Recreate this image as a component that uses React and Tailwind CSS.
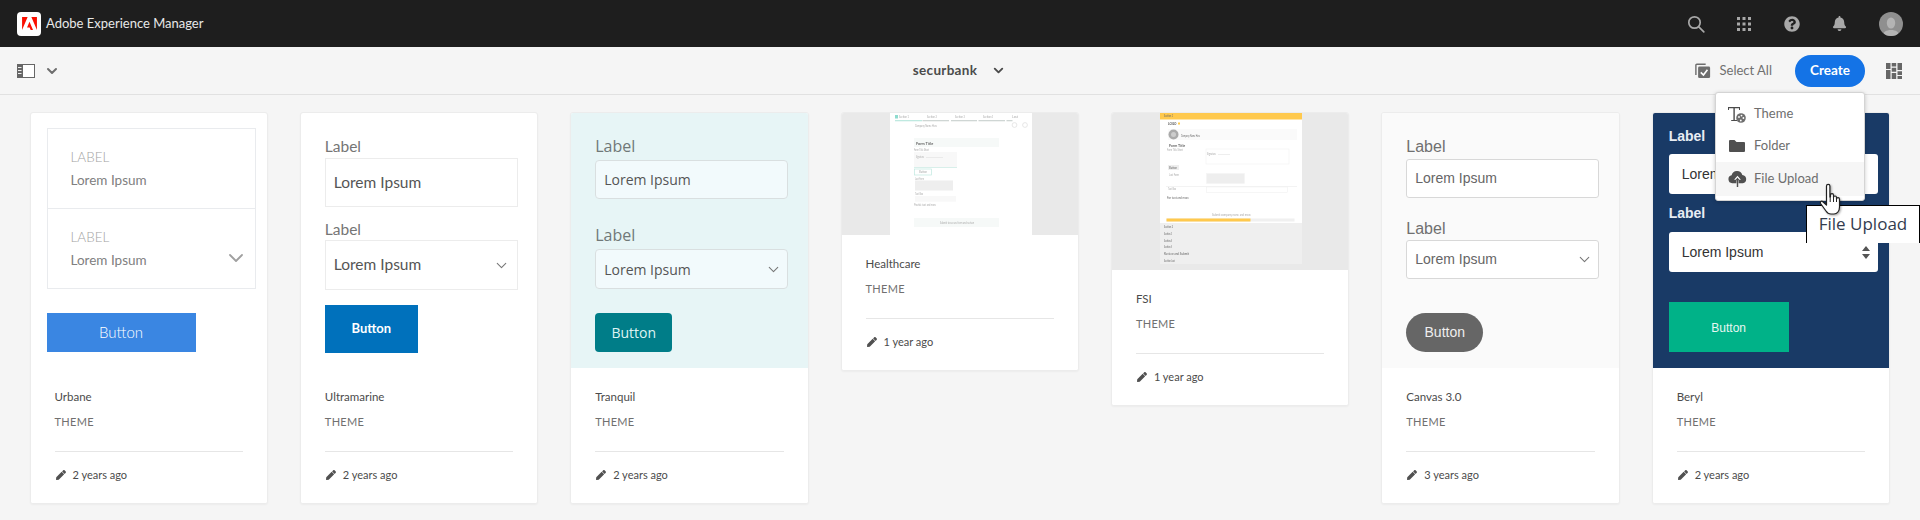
import React from "react";
import { ChevronDown } from "lucide-react";
import { FaBell, FaQuestionCircle, FaPen } from "react-icons/fa";

const SANS = "font-['Lato','Noto_Sans',sans-serif]";

// Small captions inside the thumbnails
const Tiny = ({ x, y, w, children, dark }) => (
  <text
    x={x}
    y={y}
    fontSize="3"
    textLength={w}
    lengthAdjust="spacingAndGlyphs"
    fill={dark ? "#666" : "#aaa"}
    fontFamily="Lato, sans-serif"
  >
    {children}
  </text>
);

const HealthcareThumb = () => (
  <svg width="238" height="122" viewBox="0 0 238 122" className="block blur-[0.3px]">
    <rect width="238" height="122" fill="#e9e9e9" />
    <rect x="48" width="142" height="122" fill="#fff" />
    <rect x="53" y="2" width="3" height="3.5" fill="#8fdccf" />
    <rect x="53" y="7" width="27" height="1.3" fill="#bfe9e0" />
    <rect x="80.5" y="7" width="26.5" height="1.3" fill="#cfd6d4" />
    <rect x="109" y="7" width="26" height="1.3" fill="#cfd6d4" />
    <rect x="136.5" y="7" width="26.5" height="1.3" fill="#cfd6d4" />
    <rect x="164.5" y="7" width="6" height="1.3" fill="#cfd6d4" />
    <Tiny x={57} y={4.5} w={10}>Section 1</Tiny>
    <Tiny x={85} y={4.5} w={10}>Section 2</Tiny>
    <Tiny x={113} y={4.5} w={10}>Section 3</Tiny>
    <Tiny x={141} y={4.5} w={10}>Section 4</Tiny>
    <Tiny x={170} y={4.5} w={6}>Last</Tiny>
    <Tiny x={73} y={14} w={22}>Company Name Here</Tiny>
    <circle cx="172.5" cy="12" r="2.4" fill="none" stroke="#ddd" strokeWidth="0.7" />
    <circle cx="183" cy="12" r="2.4" fill="none" stroke="#ddd" strokeWidth="0.7" />
    <rect x="72" y="25" width="85" height="9" fill="#f6f9f8" />
    <text x="74" y="31.5" fontSize="3.8" fontWeight="700" fill="#666" fontFamily="Lato, sans-serif">Form Title</text>
    <Tiny x={72} y={38} w={15}>Form Title Short</Tiny>
    <rect x="72" y="39" width="43" height="15" fill="#f8f8f8" />
    <rect x="72" y="54" width="43" height="0.7" fill="#c7e9e1" />
    <Tiny x={74} y={45} w={8}>Signature</Tiny>
    <rect x="84" y="44" width="17" height="0.5" fill="#ddd" />
    <rect x="72.5" y="56" width="17" height="6" fill="#fff" stroke="#bfe9e0" strokeWidth="0.7" />
    <Tiny x={77} y={60} w={8}>Button</Tiny>
    <Tiny x={73} y={67} w={9}>Last Form</Tiny>
    <rect x="73" y="67.5" width="38" height="10" fill="#eee" />
    <Tiny x={73} y={82} w={8}>Text Box</Tiny>
    <rect x="73" y="83" width="41" height="5.7" fill="#f8f8f8" />
    <Tiny x={72} y={93} w={22}>Provide text and more</Tiny>
    <rect x="72" y="105" width="85" height="9" fill="#f6f9f8" />
    <Tiny x={98} y={110.5} w={34}>Submit to secure form and review</Tiny>
  </svg>
);

const FsiThumb = () => (
  <svg width="238" height="157" viewBox="0 0 238 157" className="block blur-[0.3px]">
    <rect width="238" height="157" fill="#e9e9e9" />
    <rect x="48" width="142" height="151" fill="#fff" />
    <rect x="48" width="142" height="6.5" fill="#ffc94d" />
    <Tiny x={52} y={4} w={9} dark>Section 1</Tiny>
    <text x="56" y="11.5" fontSize="3" fontWeight="700" fill="#555" fontFamily="Lato, sans-serif">LOGO</text>
    <rect x="66" y="9.5" width="2" height="2" fill="#ffc94d" />
    <rect x="56" y="16" width="129" height="11" fill="#fafafa" />
    <circle cx="61.5" cy="21.5" r="5" fill="#aaa" />
    <circle cx="61.5" cy="21.5" r="2.5" fill="#ccc" />
    <Tiny x={69} y={24} w={19} dark>Company Name Here</Tiny>
    <text x="57" y="33.5" fontSize="3.6" fontWeight="700" fill="#666" fontFamily="Lato, sans-serif">Form Title</text>
    <Tiny x={55} y={38} w={16}>Form Title Short</Tiny>
    <rect x="94" y="36" width="83" height="15" fill="#fff" stroke="#eee" strokeWidth="0.5" />
    <Tiny x={95} y={42} w={9}>Signature</Tiny>
    <rect x="106" y="41" width="12" height="0.5" fill="#ddd" />
    <rect x="56" y="52" width="11" height="5" fill="#eee" />
    <Tiny x={57} y={55.8} w={8} dark>Button</Tiny>
    <Tiny x={57} y={63} w={10}>Last Form</Tiny>
    <rect x="94.5" y="60.5" width="38" height="10" fill="#eee" stroke="#f4f4f4" strokeWidth="0.5" />
    <rect x="54" y="73" width="131" height="0.7" fill="#eee" />
    <Tiny x={56} y={77} w={8}>Text Box</Tiny>
    <rect x="94.5" y="74" width="81" height="5.4" fill="#fff" stroke="#eee" strokeWidth="0.5" />
    <Tiny x={55} y={85.5} w={22} dark>For text and more</Tiny>
    <Tiny x={100} y={102.5} w={39}>Submit company name and more</Tiny>
    <rect x="54.5" y="105.5" width="128" height="3" fill="#f0f0f0" />
    <rect x="54.5" y="105.5" width="84" height="3" fill="#ffc94d" />
    <rect x="48" y="110" width="142" height="41" fill="#efefef" />
    <Tiny x={52} y={114.5} w={9} dark>Section 2</Tiny>
    <Tiny x={52} y={121.5} w={8} dark>Section 3</Tiny>
    <Tiny x={52} y={128.5} w={8} dark>Section 4</Tiny>
    <Tiny x={52} y={135} w={8} dark>Section 5</Tiny>
    <Tiny x={52} y={142} w={25} dark>Review and Submit</Tiny>
    <Tiny x={52} y={149} w={11} dark>Section Last</Tiny>
  </svg>
);

const CardFooter = ({ name, when }) => (
  <div className={`h-[135px] shrink-0 bg-white px-6 pt-[19px] text-[#4b4b4b] ${SANS}`}>
    <p className="h-5 text-[11.5px] leading-5">{name}</p>
    <p className="mt-[5px] h-5 text-[11px] leading-5 tracking-[0.3px] text-[#707070]">THEME</p>
    <div className="mt-[19px] h-px bg-[#e6e6e6]" />
    <p className="mt-[13px] flex h-5 items-center gap-[7px] text-[11px] leading-5">
      <FaPen size={10} className="ml-[1px] text-[#505050]" />
      {when}
    </p>
  </div>
);

const Card = ({ children, name, when }) => (
  <div className="flex flex-col self-start overflow-hidden rounded-[3px] border border-[#ececec] bg-white shadow-[0_1px_2px_rgba(0,0,0,0.04)]">
    {children}
    <CardFooter name={name} when={when} />
  </div>
);

const SmallChevron = ({ color = "#777" }) => <ChevronDown size={17} color={color} strokeWidth={1.5} />;

const Urbane = () => (
  <Card name="Urbane" when="2 years ago">
    <div className={`h-[255px] pl-4 pt-[15px] ${SANS}`}>
      <div className="h-[161px] w-[209px] border border-[#e9ebee]">
        <div className="h-[80px] border-b border-[#e9ebee] pl-[23px] pt-[18px]">
          <p className="h-5 text-[13.5px] font-light leading-5 text-[#a3a3a3]">LABEL</p>
          <p className="mt-[3px] text-[13.5px] leading-5 text-[#808080]">Lorem Ipsum</p>
        </div>
        <div className="flex items-end justify-between pb-3 pl-[23px] pr-[7px] pt-[18px]">
          <div>
            <p className="h-5 text-[13.5px] font-light leading-5 text-[#a3a3a3]">LABEL</p>
            <p className="mt-[3px] text-[13.5px] leading-5 text-[#808080]">Lorem Ipsum</p>
          </div>
          <ChevronDown size={24} color="#a0a0a0" strokeWidth={1.8} />
        </div>
      </div>
      <div className="mt-6 flex h-[39px] w-[149px] items-center justify-center bg-[#3a86e2] text-[15px] font-light text-white">
        Button
      </div>
    </div>
  </Card>
);

const Ultramarine = () => (
  <Card name="Ultramarine" when="2 years ago">
    <div className={`h-[255px] pl-6 pt-[23px] ${SANS}`}>
      <p className="mb-[2px] h-5 text-[15.5px] leading-5 text-[#757575]">Label</p>
      <div className="flex h-[49px] w-[193px] items-center border border-[#ececec] pl-2 text-[15.5px] text-[#555]">
        Lorem Ipsum
      </div>
      <p className="mb-px mt-[12px] h-5 text-[15.5px] leading-5 text-[#757575]">Label</p>
      <div className="flex h-[50px] w-[193px] items-center justify-between border border-[#ececec] pl-2 pr-[7px] text-[15.5px] text-[#555]">
        Lorem Ipsum
        <SmallChevron />
      </div>
      <div className="mt-[15px] flex h-[48px] w-[93px] items-center justify-center bg-[#0071bc] text-[13px] font-bold text-white">
        Button
      </div>
    </div>
  </Card>
);

const Tranquil = () => (
  <Card name="Tranquil" when="2 years ago">
    <div className="h-[255px] bg-[#e7f5f6] pl-6 pt-[23px] font-['Open_Sans',sans-serif]">
      <p className="mb-1 h-5 text-[16px] leading-5 text-[#707878]">Label</p>
      <div className="flex h-[39px] w-[193px] items-center rounded-[4px] border border-[#d9dfe0] bg-[#f2fafc] pl-2 text-[14px] text-[#555]">
        Lorem Ipsum
      </div>
      <p className="mb-1 mt-[26px] h-5 text-[16px] leading-5 text-[#707878]">Label</p>
      <div className="flex h-[40px] w-[193px] items-center justify-between rounded-[4px] border border-[#d9dfe0] bg-[#f2fafc] pl-2 pr-[5px] text-[14px] text-[#555]">
        Lorem Ipsum
        <SmallChevron />
      </div>
      <div className="mt-6 flex h-[39px] w-[77px] items-center justify-center rounded-[4px] bg-[#007d88] text-[14px] text-[#dff3f3]">
        Button
      </div>
    </div>
  </Card>
);

const Canvas = () => (
  <Card name="Canvas 3.0" when="3 years ago">
    <div className="h-[255px] bg-[#fafafa] pl-6 pt-6 font-['Liberation_Sans',sans-serif]">
      <p className="mb-[2px] h-5 text-[16px] leading-5 text-[#707070]">Label</p>
      <div className="flex h-[39px] w-[193px] items-center rounded-[3px] border border-[#d8d8d8] bg-white pl-2 text-[14px] text-[#666]">
        Lorem Ipsum
      </div>
      <p className="mb-px mt-[21px] h-5 text-[16px] leading-5 text-[#707070]">Label</p>
      <div className="flex h-[39px] w-[193px] items-center justify-between rounded-[3px] border border-[#d8d8d8] bg-white pl-2 pr-[5px] text-[14px] text-[#666]">
        Lorem Ipsum
        <SmallChevron />
      </div>
      <div className="mt-[34px] flex h-[39px] w-[77px] items-center justify-center rounded-full bg-[#666] text-[14px] text-[#eee]">
        Button
      </div>
    </div>
  </Card>
);

const Beryl = () => (
  <Card name="Beryl" when="2 years ago">
    <div className="h-[255px] bg-[#193a66] pl-4 pt-[13px] font-['Liberation_Sans',sans-serif]">
      <p className="mb-2 h-5 text-[14px] font-bold leading-5 text-[#e8edf3]">Label</p>
      <div className="flex h-[40px] w-[209px] items-center rounded-[3px] bg-white pl-[13px] text-[14px] text-[#333]">
        Lorem Ipsum
      </div>
      <p className="mb-[9px] mt-[9px] h-5 text-[14px] font-bold leading-5 text-[#e8edf3]">Label</p>
      <div className="flex h-[40px] w-[209px] items-center justify-between rounded-[3px] bg-white pl-[13px] pr-[8px] text-[14px] text-[#333]">
        Lorem Ipsum
        <svg width="8" height="13" viewBox="0 0 8 13">
          <path d="M4 0 8 5H0zM4 13 0 8h8z" fill="#555" />
        </svg>
      </div>
      <div className="mt-[30px] flex h-[50px] w-[120px] items-center justify-center bg-[#00b288] pt-[2px] text-[12px] text-[#e6f7f2]">
        Button
      </div>
    </div>
  </Card>
);

const AdobeMark = () => (
  <svg width="15" height="13" viewBox="0 0 24 21" fill="#fa0f00">
    <path d="M15 0h9v21zM9 0H0v21zM12 7.8 17.7 21h-3.8l-1.7-4.2H8z" />
  </svg>
);

const TopBar = () => (
  <header className={`flex h-[47px] items-center justify-between bg-[#1e1e1e] pl-[17px] pr-[17px] ${SANS}`}>
    <div className="flex items-center gap-[5px]">
      <span className="flex h-6 w-6 items-center justify-center rounded-[4px] bg-white">
        <AdobeMark />
      </span>
      <span className="text-[13px] text-[#e8e8e8]">Adobe Experience Manager</span>
    </div>
    <div className="flex items-center text-[#a8a8a8]">
      <svg width="18" height="18" viewBox="0 0 18 18" fill="none" stroke="#a8a8a8" strokeWidth="1.7">
        <circle cx="7.5" cy="7.5" r="5.7" />
        <path d="m11.8 11.8 5 5" strokeLinecap="round" />
      </svg>
      <svg width="16" height="16" viewBox="0 0 16 16" fill="#a8a8a8" className="ml-[31px]">
        {[1, 6.5, 12].flatMap((y) =>
          [1, 6.5, 12].map((x) => <rect key={`${x}-${y}`} x={x} y={y} width="3" height="3" />)
        )}
      </svg>
      <FaQuestionCircle size={16} className="ml-[32px]" />
      <FaBell size={15} className="ml-[32px]" />
      <span className="ml-[32px] flex h-6 w-6 items-end justify-center overflow-hidden rounded-full bg-[#8f8f8f]">
        <svg width="16" height="20" viewBox="0 0 16 20" fill="#b4b4b4">
          <ellipse cx="8" cy="7" rx="4.2" ry="5.5" />
          <path d="M0 20c0-4 3-6 8-6s8 2 8 6z" />
        </svg>
      </span>
    </div>
  </header>
);

const ToolBar = () => (
  <div className={`grid h-[48px] grid-cols-[1fr_auto_1fr] items-center border-b border-[#e1e1e1] bg-[#f5f5f5] pl-[17px] pr-[18px] ${SANS}`}>
    <div className="flex items-center gap-[9px]">
      <svg width="18" height="14" viewBox="0 0 18 14">
        <path d="M0 0h18v14H0z" fill="#666" />
        <path d="M6 1h11v12H6z" fill="#fff" />
        <path d="M1 3h3.5v1H1zM1 6h3.5v1H1zM1 9h3.5v1H1z" fill="#eee" />
      </svg>
      <ChevronDown size={16} color="#6e6e6e" strokeWidth={3} />
    </div>
    <div className="flex items-center gap-[14px] text-[13.5px] font-bold tracking-[0.3px] text-[#4b4b4b]">
      securbank
      <ChevronDown size={15} color="#4b4b4b" strokeWidth={3} />
    </div>
    <div className="flex items-center justify-end">
      <svg width="16" height="16" viewBox="0 0 18 18" fill="none">
        <path d="M1 13.5V2.5a1 1 0 0 1 1-1h10" stroke="#6e6e6e" strokeWidth="1.6" />
        <rect x="3.5" y="4" width="13.5" height="13" rx="1.5" fill="#6e6e6e" />
        <path d="m6.5 10.5 3 3 4.5-6" stroke="#fff" strokeWidth="1.8" />
      </svg>
      <span className="ml-[9px] text-[13px] text-[#707070]">Select All</span>
      <button className="ml-[23px] flex h-[32px] w-[70px] items-center justify-center rounded-full bg-[#1473e6] text-[13.5px] font-bold text-white">
        Create
      </button>
      <svg width="16" height="16" viewBox="0 0 16 16" fill="#666" className="ml-[21px]">
        <path d="M0 0h4.5v6H0zM0 7h4.5v9H0zM5.7 0h4.5v3.5H5.7zM5.7 4.8h4.5v4H5.7zM5.7 10h4.5v6H5.7zM11.5 0H16v7h-4.5zM11.5 8.2H16V12h-4.5zM11.5 13H16v3h-4.5z" />
      </svg>
    </div>
  </div>
);

const CreateMenu = () => (
  <div className={`absolute left-[1715px] top-[92px] w-[150px] rounded-[3px] border border-[#d4d4d4] bg-white pb-[4px] pt-[5px] text-[13px] text-[#6e6e6e] shadow-[0_1px_4px_rgba(0,0,0,0.2)] ${SANS}`}>
    <div className="flex h-[32px] items-center gap-[8px] pl-[12px]">
      <svg width="18" height="17" viewBox="0 0 18 17">
        <path d="M0 1h12v3h-1V2.2H6.8V14H9v1H3.2v-1h2.2V2.2H1V4H0z" fill="#4b4b4b" />
        <circle cx="13" cy="12" r="4.8" fill="#6e6e6e" />
        <circle cx="11" cy="11" r="0.9" fill="#fff" />
        <circle cx="13.5" cy="9.6" r="0.9" fill="#fff" />
        <circle cx="15.4" cy="12" r="0.9" fill="#fff" />
        <circle cx="12.8" cy="14.5" r="0.9" fill="#fff" />
      </svg>
      Theme
    </div>
    <div className="flex h-[32px] items-center gap-[9px] pl-[13px]">
      <svg width="16" height="12" viewBox="0 0 16 12" fill="#505050">
        <path d="M0 1a1 1 0 0 1 1-1h4.5l2 2H15a1 1 0 0 1 1 1v8a1 1 0 0 1-1 1H1a1 1 0 0 1-1-1z" />
      </svg>
      Folder
    </div>
    <div className="flex h-[34px] items-center gap-[7px] bg-[#f6f6f6] pl-[12px]">
      <svg width="19" height="16" viewBox="0 0 18 15" fill="#505050">
        <path d="M4 11.5a3.8 3.8 0 0 1-.6-7.5A5.3 5.3 0 0 1 13.6 3.6 4 4 0 0 1 14 11.5z" />
        <path d="M9 4.5 5.8 8.3h2.2V15h2V8.3h2.2z" fill="#fff" />
        <path d="M9 6 7 8.6h1.3V15h1.4V8.6H11z" fill="#505050" />
      </svg>
      File Upload
    </div>
  </div>
);

const HandCursor = () => (
  <svg width="26" height="34" viewBox="0 0 26 34" className="absolute left-[1819px] top-[183px] drop-shadow-[1px_1px_1px_rgba(0,0,0,0.35)]">
    <path
      d="M7.5 3a1.7 1.7 0 0 1 3.4 0v11l.6-.3v-1.5a1.5 1.5 0 0 1 3 0v2.3a1.5 1.5 0 0 1 3 0v1.7a1.5 1.5 0 0 1 3 0V24c0 4-2.4 7-5.5 7H12c-2.5 0-4-1.4-5-3L1.6 20.5c-.9-1.5.9-3 2.2-1.8l3.7 3.3z"
      fill="#fff"
      stroke="#222"
      strokeWidth="1.2"
      strokeLinejoin="round"
    />
    <path d="M11.2 14v5M14.5 14.5v4.5M17.5 16v3" stroke="#222" strokeWidth="1" fill="none" />
  </svg>
);

const Tooltip = () => (
  <div className="absolute left-[1806px] top-[205px] flex h-[38px] w-[114px] items-center justify-center border border-b-0 border-black bg-white pb-[2px] font-['Open_Sans',sans-serif] text-[17px] text-[#333c4e]">
    File Upload
  </div>
);

export default function App() {
  return (
    <div className="relative h-[520px] w-[1920px] overflow-hidden bg-[#f5f5f5]">
      <TopBar />
      <ToolBar />
      <main className="grid grid-cols-7 gap-8 pl-[29.5px] pr-[30px] pt-[17px]">
        <Urbane />
        <Ultramarine />
        <Tranquil />
        <Card name="Healthcare" when="1 year ago">
          <HealthcareThumb />
        </Card>
        <Card name="FSI" when="1 year ago">
          <FsiThumb />
        </Card>
        <Canvas />
        <Beryl />
      </main>
      <CreateMenu />
      <Tooltip />
      <HandCursor />
    </div>
  );
}
